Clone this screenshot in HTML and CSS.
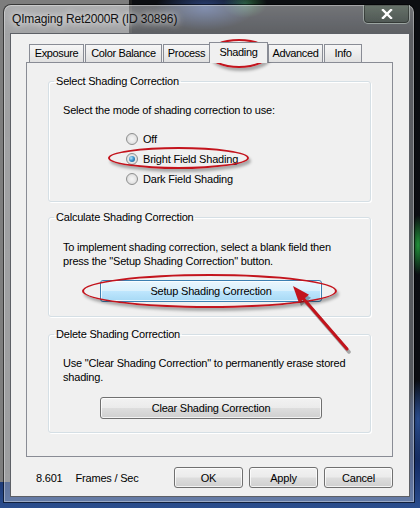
FILE: index.html
```html
<!DOCTYPE html>
<html>
<head>
<meta charset="utf-8">
<title>QImaging Ret2000R</title>
<link rel="stylesheet" href="styles.css">
</head>
<body>
<div class="desktop">
  <div class="behind"></div>
  <div class="window">
    <div class="titlebar">
      <span class="title">QImaging Ret2000R (ID 30896)</span>
      <div class="close">
        <svg width="12" height="10" viewBox="0 0 12 10"><path d="M2 1 L10 9 M10 1 L2 9" stroke="#fff" stroke-width="2.4" stroke-linecap="square"/></svg>
      </div>
    </div>
    <div class="client">
      <div class="tabs">
        <div class="tab tab-exposure">Exposure</div>
        <div class="tab tab-color">Color Balance</div>
        <div class="tab tab-process">Process</div>
        <div class="tab tab-active">Shading</div>
        <div class="tab tab-advanced">Advanced</div>
        <div class="tab tab-info">Info</div>
      </div>
      <div class="panel">
        <fieldset class="group group-select">
          <legend>Select Shading Correction</legend>
          <div class="line">Select the mode of shading correction to use:</div>
          <div class="radios">
            <div class="radio-row"><span class="radio"></span><span>Off</span></div>
            <div class="radio-row"><span class="radio radio-on"></span><span>Bright Field Shading</span></div>
            <div class="radio-row"><span class="radio"></span><span>Dark Field Shading</span></div>
          </div>
        </fieldset>
        <fieldset class="group group-calc">
          <legend>Calculate Shading Correction</legend>
          <div class="line">To implement shading correction, select a blank field then<br>press the "Setup Shading Correction" button.</div>
          <div class="btn btn-wide btn-hot">Setup Shading Correction</div>
        </fieldset>
        <fieldset class="group group-delete">
          <legend>Delete Shading Correction</legend>
          <div class="line">Use "Clear Shading Correction" to permanently erase stored<br>shading.</div>
          <div class="btn btn-wide">Clear Shading Correction</div>
        </fieldset>
      </div>
      <div class="footer">
        <span class="fps">8.601</span>
        <span class="fps-label">Frames / Sec</span>
        <div class="footer-buttons">
          <div class="btn btn-small">OK</div>
          <div class="btn btn-small">Apply</div>
          <div class="btn btn-small">Cancel</div>
        </div>
      </div>
    </div>
  </div>

  <div class="mark mark-tab"></div>
  <div class="mark mark-radio"></div>
  <div class="mark mark-button"></div>
  <svg class="arrow" width="420" height="508" viewBox="0 0 420 508">
    <g opacity="0.3" transform="translate(2,3)">
      <line x1="347" y1="349" x2="302" y2="297" stroke="#000" stroke-width="3.5" stroke-linecap="round"/>
      <polygon points="293,286 309,294.7 299,303" fill="#000"/>
    </g>
    <line x1="347" y1="349" x2="302" y2="297" stroke="#c2141c" stroke-width="3" stroke-linecap="round"/>
    <polygon points="293,286 309,294.7 299,303" fill="#c2141c"/>
  </svg>
</div>
</body>
</html>
```
FILE: styles.css
```css
* { box-sizing: border-box; }
html, body { margin: 0; padding: 0; }
body {
  width: 420px;
  height: 508px;
  overflow: hidden;
  font-family: "Liberation Sans", Arial, sans-serif;
  font-size: 11px;
  color: #000;
}

.desktop {
  position: relative;
  width: 420px;
  height: 508px;
  padding: 5px 6px 0 4px;
  background:
    radial-gradient(ellipse 50px 22px at 205px 8px, rgba(70,110,210,0.55), transparent),
    radial-gradient(ellipse 22px 14px at 245px 4px, rgba(70,170,90,0.5), transparent),
    radial-gradient(ellipse 8px 30px at 418px 245px, rgba(40,190,70,0.75), transparent),
    radial-gradient(ellipse 10px 40px at 418px 420px, rgba(60,110,200,0.6), transparent),
    linear-gradient(180deg, #0c0e12 0%, #0b0d12 75%, #17306a 92%, #2b4e8e 100%);
}

.behind {
  position: absolute;
  left: 0;
  top: 0;
  width: 132px;
  height: 482px;
  background: #7d7d7d;
  border-right: 3px solid #1e1e1e;
}

.window {
  position: relative;
  width: 410px;
  height: 497px;
  padding: 0 4px 5px 6px;
  display: flex;
  flex-direction: column;
  border-radius: 7px 7px 0 0;
  background:
    linear-gradient(180deg, rgba(255,255,255,0.18) 0%, rgba(255,255,255,0.05) 6%, rgba(255,255,255,0) 100%),
    rgba(214,216,222,0.36);
  box-shadow: 0 0 0 1px rgba(0,0,0,0.55), inset 0 0 0 1px rgba(255,255,255,0.35);
}

.titlebar {
  height: 28px;
  display: flex;
  justify-content: space-between;
  align-items: flex-start;
}

.title {
  margin: 6px 0 0 2px;
  font-size: 12px;
  line-height: 16px;
  letter-spacing: -0.15px;
  color: #111;
  text-shadow: 0 0 6px rgba(255,255,255,0.9), 0 0 10px rgba(255,255,255,0.6);
}

.close {
  width: 47px;
  height: 19px;
  display: flex;
  align-items: center;
  justify-content: center;
  border: 1px solid rgba(210,215,215,0.55);
  border-top: none;
  border-radius: 0 0 5px 5px;
  background: linear-gradient(180deg, rgba(80,110,80,0.35), rgba(40,60,40,0.35));
  box-shadow: inset 0 0 0 1px rgba(0,0,0,0.35);
}

.client {
  flex: 1;
  display: flex;
  flex-direction: column;
  padding: 8px 16px 8px 15px;
  background: #f0f0f0;
  border: 1px solid #5d6066;
}

.tabs {
  display: flex;
  align-items: flex-end;
  height: 20px;
  padding-left: 3px;
  position: relative;
  z-index: 1;
}

.tab {
  height: 18px;
  line-height: 17px;
  border: 1px solid #898c95;
  border-bottom: none;
  background: linear-gradient(180deg, #f6f6f6 0%, #ececec 50%, #e0e0e0 100%);
  margin-right: 1px;
  letter-spacing: -0.35px;
  text-align: center;
  white-space: nowrap;
  overflow: hidden;
}

.tab-exposure { width: 55px; }
.tab-color { width: 77px; }
.tab-process { width: 47px; }
.tab-advanced { width: 55px; }
.tab-info { width: 38px; }

.tab-active {
  width: 59px;
  height: 21px;
  line-height: 19px;
  margin: 0 0 -1px -2px;
  background: #f0f0f0;
  position: relative;
}

.panel {
  border: 1px solid #898c95;
  padding: 11px 21px 23px;
  background: #f0f0f0;
}

.group {
  margin: 0;
  border: 1px solid #d5dfe5;
  border-radius: 3px;
  box-shadow: inset 1px 1px 0 #fff, 1px 1px 0 #fff;
  padding: 15px 14px 12px;
  min-width: 0;
}

.group legend {
  padding: 0 2px;
  margin-left: -9px;
  line-height: 14px;
  letter-spacing: -0.2px;
}

.group-calc { margin-top: 8px; padding: 16px 14px 14px; }
.group-delete { margin-top: 10px; padding: 15px 14px 13px; }

.line {
  line-height: 14px;
  letter-spacing: -0.2px;
}

.radios {
  margin: 12px 0 0 63px;
}

.radio-row {
  height: 20px;
  display: flex;
  align-items: center;
  gap: 5px;
  letter-spacing: -0.2px;
}

.radio {
  width: 12px;
  height: 12px;
  border-radius: 50%;
  border: 1px solid #8e8f8f;
  background: radial-gradient(circle at 50% 50%, #f6f6f6 0%, #e9e9e9 45%, #cfcfcf 100%);
  display: flex;
  align-items: center;
  justify-content: center;
}

.radio-on::after {
  content: "";
  width: 6px;
  height: 6px;
  border-radius: 50%;
  background: radial-gradient(circle at 35% 35%, #b8e4fb 0%, #3e96cf 45%, #154f7c 100%);
}

.btn {
  height: 22px;
  display: flex;
  align-items: center;
  justify-content: center;
  border: 1px solid #707070;
  border-radius: 3px;
  background: linear-gradient(180deg, #f2f2f2 0%, #ebebeb 48%, #dddddd 52%, #cfcfcf 100%);
  box-shadow: inset 0 0 0 1px rgba(255,255,255,0.75);
  letter-spacing: -0.2px;
}

.btn-wide {
  width: 222px;
  margin: 12px 0 0 37px;
}

.group-delete .btn-wide { margin-top: 13px; }

.btn-hot {
  border-color: #3c7fb1;
  background: linear-gradient(180deg, #eaf6fd 0%, #d9f0fc 48%, #bee6fd 52%, #a7d9f5 100%);
}

.footer {
  margin-top: 10px;
  height: 21px;
  display: flex;
  align-items: center;
}

.fps { margin-left: 10px; letter-spacing: -0.2px; }
.fps-label { margin-left: 13px; letter-spacing: -0.2px; }

.footer-buttons {
  margin-left: auto;
  display: flex;
  gap: 6px;
}

.btn-small {
  width: 69px;
  height: 21px;
}

.mark {
  position: absolute;
  border: 2px solid #c3141d;
  border-radius: 50%;
  box-shadow: 2px 3px 3px rgba(0,0,0,0.3);
  pointer-events: none;
}

.mark-tab { left: 208px; top: 39px; width: 62px; height: 29px; }
.mark-radio { left: 108px; top: 147px; width: 141px; height: 22px; }
.mark-button { left: 82px; top: 274px; width: 255px; height: 34px; }

.arrow {
  position: absolute;
  left: 0;
  top: 0;
  pointer-events: none;
}
```
